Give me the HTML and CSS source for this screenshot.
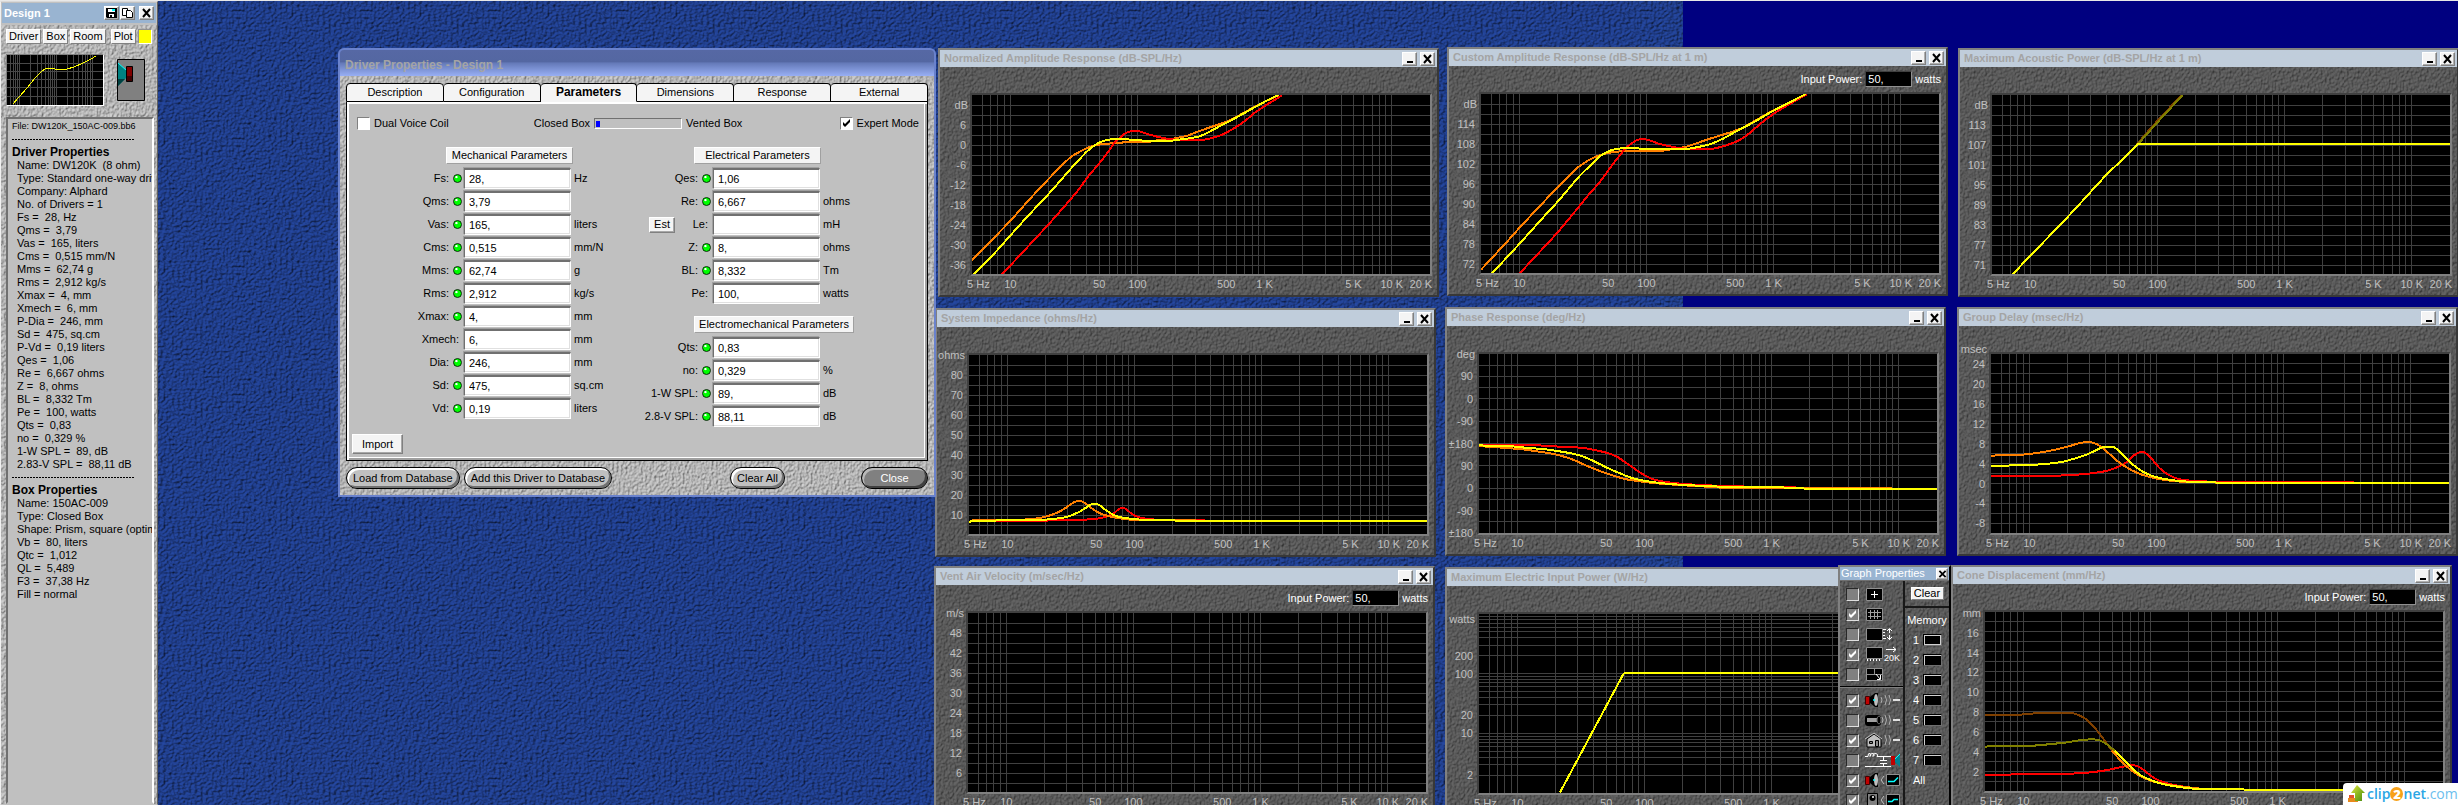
FILE: index.html
```html
<!DOCTYPE html>
<html lang="en">
<head>
<meta charset="utf-8">
<title>Driver Properties - Design 1</title>
<link rel="stylesheet" href="styles.css">
</head>
<body>
<main class="desktop">

<aside class="sidebar">
  <header class="side-title">
    <h1>Design 1</h1>
    <button class="tbtn" aria-label="Save"><svg viewBox="0 0 11 10"><path d="M0 0h11v10H1L0 9z" fill="#000"/><path d="M2 1h7v3H2z" fill="#fff"/><path d="M6 1h3v2H6z" fill="#0ff"/><path d="M3 6h5v3H3z" fill="#fff"/><path d="M4 7h2v2H4z" fill="#000"/></svg></button>
    <button class="tbtn" aria-label="Copy"><svg viewBox="0 0 11 10"><path d="M.5.5h5v7h-5z" fill="#fff" stroke="#000"/><path d="M4.500 2.500h4l2 2v5h-6z" fill="#fff" stroke="#000"/></svg></button>
    <button class="tbtn tbtn-close" aria-label="Close design"><svg viewBox="0 0 11 10"><path d="M2 1l7 8M9 1l-7 8" stroke="#000" stroke-width="2"/></svg></button>
  </header>
  <div class="side-body">
    <nav class="side-tools">
      <button class="tool">Driver</button><button class="tool">Box</button><button class="tool">Room</button>
      <button class="tool plot">Plot</button><button class="swatch" aria-label="Plot colour"></button>
    </nav>
    <div class="side-preview">
      <svg class="mini" viewBox="0 0 96 50" aria-label="Response preview">
        <path d="M0 8h96M0 16h96M0 24h96M0 32h96M0 41h96M3 0v50M6 0v50M8 0v50M10 0v50M12 0v50M23 0v50M30 0v50M34 0v50M38 0v50M41 0v50M43 0v50M45 0v50M47 0v50M49 0v50M60 0v50M66 0v50M71 0v50M75 0v50M78 0v50M80 0v50M83 0v50M85 0v50" stroke="#484848"/>
        <polyline points="6,49 12,42 20,33 28,23 34,17 38,14 43,13 48,14 60,14 67,12 76,8 84,4 89,1" fill="none" stroke="#ff0" stroke-width="1"/>
      </svg>
      <svg class="cab" viewBox="0 0 28 42" aria-label="Closed box">
        <path d="M.5.5h27v41H.5z" fill="#808080" stroke="#000"/>
        <path d="M1 4l8 7v8l-8 8z" fill="#008080"/><path d="M1 4l8 7" stroke="#0ff"/><path d="M1 20h7l-7 7z" fill="#004040"/>
        <path d="M9.500 7.500h6v15h-6z" fill="#800000" stroke="#000"/><path d="M10 17h5v5h-5z" fill="#400000"/>
      </svg>
    </div>
    <section class="props">
      <p class="file">File: DW120K_150AC-009.bb6</p>
      <hr>
      <h2>Driver Properties</h2>
      <ul>
        <li>Name: DW120K&nbsp; (8 ohm)</li><li>Type: Standard one-way driver</li><li>Company: Alphard</li><li>No. of Drivers = 1</li>
        <li>Fs =&nbsp; 28, Hz</li><li>Qms =&nbsp; 3,79</li><li>Vas =&nbsp; 165, liters</li><li>Cms =&nbsp; 0,515 mm/N</li><li>Mms =&nbsp; 62,74 g</li>
        <li>Rms =&nbsp; 2,912 kg/s</li><li>Xmax =&nbsp; 4, mm</li><li>Xmech =&nbsp; 6, mm</li><li>P-Dia =&nbsp; 246, mm</li><li>Sd =&nbsp; 475, sq.cm</li>
        <li>P-Vd =&nbsp; 0,19 liters</li><li>Qes =&nbsp; 1,06</li><li>Re =&nbsp; 6,667 ohms</li><li>Z =&nbsp; 8, ohms</li><li>BL =&nbsp; 8,332 Tm</li>
        <li>Pe =&nbsp; 100, watts</li><li>Qts =&nbsp; 0,83</li><li>no =&nbsp; 0,329 %</li><li>1-W SPL =&nbsp; 89, dB</li><li>2.83-V SPL =&nbsp; 88,11 dB</li>
      </ul>
      <hr>
      <h2>Box Properties</h2>
      <ul>
        <li>Name: 150AC-009</li><li>Type: Closed Box</li><li>Shape: Prism, square (optimum)</li><li>Vb =&nbsp; 80, liters</li><li>Qtc =&nbsp; 1,012</li>
        <li>QL =&nbsp; 5,489</li><li>F3 =&nbsp; 37,38 Hz</li><li>Fill = normal</li>
      </ul>
    </section>
  </div>
</aside>

<section class="win w1" data-chart="normalized"><header><h2>Normalized Amplitude Response (dB-SPL/Hz)</h2></header></section>
<section class="win w2" data-chart="custom" data-power="50,"><header><h2>Custom Amplitude Response (dB-SPL/Hz at 1 m)</h2></header></section>
<section class="win w3" data-chart="acoustic"><header><h2>Maximum Acoustic Power (dB-SPL/Hz at 1 m)</h2></header></section>
<section class="win w4" data-chart="impedance"><header><h2>System Impedance (ohms/Hz)</h2></header></section>
<section class="win w5" data-chart="phase"><header><h2>Phase Response (deg/Hz)</h2></header></section>
<section class="win w6" data-chart="delay"><header><h2>Group Delay (msec/Hz)</h2></header></section>
<section class="win w7" data-chart="vent" data-power="50,"><header><h2>Vent Air Velocity (m/sec/Hz)</h2></header></section>
<section class="win w8" data-chart="electric"><header><h2>Maximum Electric Input Power (W/Hz)</h2></header></section>
<section class="win w9" data-chart="cone" data-power="50,"><header><h2>Cone Displacement (mm/Hz)</h2></header></section>

<section class="dialog">
  <header><h2>Driver Properties - Design 1</h2></header>
  <div class="dlg-body">
    <nav class="tabs">
      <button>Description</button><button>Configuration</button><button class="on">Parameters</button><button>Dimensions</button><button>Response</button><button>External</button>
    </nav>
    <form class="panel">
      <div class="options">
        <label><input type="checkbox" class="box"> Dual Voice Coil</label>
        <div class="kind">Closed Box <span class="meter"><i></i></span> Vented Box</div>
        <label><input type="checkbox" class="box" checked> Expert Mode</label>
      </div>
      <div class="groups">
        <div class="group mech">
          <h3 class="chip">Mechanical Parameters</h3>
          <div class="field"><label for="fs">Fs:<i class="led"></i></label><input id="fs" value="28,"><span>Hz</span></div>
          <div class="field"><label for="qms">Qms:<i class="led"></i></label><input id="qms" value="3,79"><span></span></div>
          <div class="field"><label for="vas">Vas:<i class="led"></i></label><input id="vas" value="165,"><span>liters</span></div>
          <div class="field"><label for="cms">Cms:<i class="led"></i></label><input id="cms" value="0,515"><span>mm/N</span></div>
          <div class="field"><label for="mms">Mms:<i class="led"></i></label><input id="mms" value="62,74"><span>g</span></div>
          <div class="field"><label for="rms">Rms:<i class="led"></i></label><input id="rms" value="2,912"><span>kg/s</span></div>
          <div class="field"><label for="xmax">Xmax:<i class="led"></i></label><input id="xmax" value="4,"><span>mm</span></div>
          <div class="field"><label for="xmech" class="noled">Xmech:</label><input id="xmech" value="6,"><span>mm</span></div>
          <div class="field"><label for="dia">Dia:<i class="led"></i></label><input id="dia" value="246,"><span>mm</span></div>
          <div class="field"><label for="sd">Sd:<i class="led"></i></label><input id="sd" value="475,"><span>sq.cm</span></div>
          <div class="field"><label for="vd">Vd:<i class="led"></i></label><input id="vd" value="0,19"><span>liters</span></div>
        </div>
        <div class="group elec">
          <h3 class="chip">Electrical Parameters</h3>
          <div class="field"><label for="qes">Qes:<i class="led"></i></label><input id="qes" value="1,06"><span></span></div>
          <div class="field"><label for="re">Re:<i class="led"></i></label><input id="re" value="6,667"><span>ohms</span></div>
          <div class="field"><div class="with-est"><button type="button" class="small">Est</button><label for="le" class="noled">Le:</label></div><input id="le" value=""><span>mH</span></div>
          <div class="field"><label for="z">Z:<i class="led"></i></label><input id="z" value="8,"><span>ohms</span></div>
          <div class="field"><label for="bl">BL:<i class="led"></i></label><input id="bl" value="8,332"><span>Tm</span></div>
          <div class="field"><label for="pe" class="noled">Pe:</label><input id="pe" value="100,"><span>watts</span></div>
          <h3 class="chip wide">Electromechanical Parameters</h3>
          <div class="field"><label for="qts">Qts:<i class="led"></i></label><input id="qts" value="0,83"><span></span></div>
          <div class="field"><label for="no">no:<i class="led"></i></label><input id="no" value="0,329"><span>%</span></div>
          <div class="field"><label for="spl1">1-W SPL:<i class="led"></i></label><input id="spl1" value="89,"><span>dB</span></div>
          <div class="field"><label for="spl2">2.8-V SPL:<i class="led"></i></label><input id="spl2" value="88,11"><span>dB</span></div>
        </div>
      </div>
      <button type="button" class="small import">Import</button>
    </form>
    <footer class="actions">
      <button>Load from Database</button><button>Add this Driver to Database</button><button class="clear-all">Clear All</button><button class="close">Close</button>
    </footer>
  </div>
</section>

<section class="palette">
  <header><h2>Graph Properties</h2><button class="tbtn" aria-label="Close graph properties"><svg viewBox="0 0 9 9"><path d="M1 1l7 7M8 1l-7 7" stroke="#000" stroke-width="2"/></svg></button></header>
  <div class="pal-body">
    <div class="pal-left">
      <label><input type="checkbox" class="dbox" aria-label="Cursor"><svg viewBox="0 0 36 16"><path d="M1.500 2.500h16v12h-16z" fill="#000" stroke="#909090"/><path d="M6 8.500h7M9.500 5v7" stroke="#fff"/></svg></label>
      <label><input type="checkbox" class="dbox" aria-label="Grid" checked><svg viewBox="0 0 36 16"><path d="M1.500 2.500h16v12h-16z" fill="#000" stroke="#909090"/><path d="M3 6.500h13M3 10.500h13M5.500 4v9M9.500 4v9M12.500 4v9" stroke="#a0a0a0"/></svg></label>
      <label><input type="checkbox" class="dbox" aria-label="Vertical scale"><svg viewBox="0 0 36 16"><path d="M1.500 2.500h16v12h-16z" fill="#000" stroke="#909090"/><path d="M18 3.500h3M18 6.500h2M18 9.500h2M18 12.500h3M24.500 3v4M24.500 9v5M22 5l2.500-2.500L27 5M22 11l2.500 2.500L27 11" stroke="#fff" fill="none"/></svg></label>
      <label><input type="checkbox" class="dbox" aria-label="Extend to 20K" checked><svg viewBox="0 0 36 16"><path d="M1.500 1.500h16v11h-16z" fill="#000" stroke="#909090"/><path d="M2.500 13v2M5.500 13v2M8.500 13v2M11.500 13v2M14.500 13v2M21 3.500h10M28 1l3 2.500L28 6" stroke="#fff" fill="none"/><text x="19" y="15" font-size="9" fill="#fff">20K</text></svg></label>
      <label><input type="checkbox" class="dbox" aria-label="Resize"><svg viewBox="0 0 36 16"><path d="M1.500 2.500h16v12h-16z" fill="#000" stroke="#909090"/><path d="M2 8.500h15M9.500 3v6" stroke="#909090"/><path d="M11 8l4 5M15.500 9v4.500H12" stroke="#fff" fill="none"/></svg></label>
      <hr>
      <label><input type="checkbox" class="dbox" aria-label="Driver response" checked><svg viewBox="0 0 36 16"><path d="M.5 4.500h4v8h-4z" fill="#c00000" stroke="#400"/><path d="M5 5l5-4h3v14h-3l-5-4z" fill="#000"/><ellipse cx="11" cy="8" rx="2" ry="6" fill="#c0c0c0"/><circle cx="9" cy="8" r="1" fill="#0ff"/><path d="M16 5q2 3 0 6M20 3q3 5 0 10M24 3q3 5 0 10" stroke="#b0b0b0" fill="none"/><path d="M28 8h7" stroke="#e0e0e0" stroke-width="2"/></svg></label>
      <label><input type="checkbox" class="dbox" aria-label="Vent response"><svg viewBox="0 0 36 16"><rect x="0" y="3" width="16" height="11" rx="3" fill="#000"/><path d="M2 6h11v4H2z" fill="#a0a0a0"/><ellipse cx="14" cy="8" rx="2" ry="4" fill="#000" stroke="#666"/><path d="M17 5q2 3 0 6M20 3q3 5 0 10M24 3q3 5 0 10" stroke="#b0b0b0" fill="none"/><path d="M28 8h7" stroke="#e0e0e0" stroke-width="2"/></svg></label>
      <label><input type="checkbox" class="dbox" aria-label="Room response" checked><svg viewBox="0 0 36 16"><path d="M2 7l7-5 7 5v8H2z" fill="#c0c0c0" stroke="#000"/><path d="M0 7l9-6 8 6" stroke="#c0c0c0" fill="none"/><path d="M4.500 9.500h3v2h-3zM10.500 8.500h3v6h-3z" fill="#888" stroke="#000"/><path d="M20 3q3 5 0 10M24 3q3 5 0 10" stroke="#b0b0b0" fill="none"/><path d="M28 8h7" stroke="#e0e0e0" stroke-width="2"/></svg></label>
      <label><input type="checkbox" class="dbox" aria-label="Network"><svg viewBox="0 0 36 16"><path d="M0 4.500h3q0-4 2-3t0 3q0-4 3-3t0 3q0-4 3-3t1 3h14M18.500 5v3M15 8.500h7M15 11.500h7M18.500 11v3M0 14.500h26" stroke="#fff" fill="none"/><path d="M26 4h4v9h-4z" fill="#c00000"/><path d="M30 7l5-5v13l-5-5z" fill="#008090"/><path d="M30 7l5-5" stroke="#0ff"/></svg></label>
      <label><input type="checkbox" class="dbox" aria-label="Driver equaliser" checked><svg viewBox="0 0 36 16"><path d="M.5 4.500h4v8h-4z" fill="#c00000" stroke="#400"/><path d="M5 5l5-4h3v14h-3l-5-4z" fill="#000"/><ellipse cx="11" cy="8" rx="2" ry="6" fill="#c0c0c0"/><circle cx="9" cy="8" r="1" fill="#0ff"/><path d="M19 4l-3 4 3 4" stroke="#c0c0c0" fill="none"/><path d="M21.500 2.500h13v11h-13z" fill="#000" stroke="#909090"/><path d="M23 9.500h6l4-4" stroke="#0ff" stroke-width="1.500" fill="none"/></svg></label>
      <label><input type="checkbox" class="dbox" aria-label="Box equaliser" checked><svg viewBox="0 0 36 16"><path d="M2.500 1.500h10v15h-10z" fill="#808080" stroke="#000"/><circle cx="7.500" cy="6" r="3" fill="#000"/><circle cx="8" cy="5" r="1" fill="#fff"/><path d="M19 4l-3 4 3 4" stroke="#c0c0c0" fill="none"/><path d="M21.500 2.500h13v11h-13z" fill="#000" stroke="#909090"/><path d="M23 9.500h4l2-2h4" stroke="#0ff" stroke-width="1.500" fill="none"/></svg></label>
    </div>
    <div class="pal-right">
      <div class="clear"><button>Clear</button></div>
      <p>Memory</p>
      <ol>
        <li>1<button class="on" aria-label="Memory 1"></button></li><li>2<button aria-label="Memory 2"></button></li><li>3<button aria-label="Memory 3"></button></li><li>4<button aria-label="Memory 4"></button></li><li>5<button aria-label="Memory 5"></button></li><li>6<button aria-label="Memory 6"></button></li><li>7<button aria-label="Memory 7"></button></li><li>All</li>
      </ol>
    </div>
  </div>
</section>

<div class="badge">
  <svg viewBox="0 0 17 18"><defs><linearGradient id="ga" x1="0" y1="0" x2="1" y2="1"><stop offset="0" stop-color="#e8e840"/><stop offset=".5" stop-color="#8cb820"/><stop offset="1" stop-color="#4a8a10"/></linearGradient></defs><path d="M1 10h5v4H1z" fill="#e0562c"/><path d="M0 13h10v4H0z" fill="#e88a1c"/><path d="M9 0l8 8h-3v8H7V8H3z" fill="url(#ga)"/></svg>
  <span>clip<b>2</b>net<em>.com</em></span>
</div>
</main>
<script src="charts.js"></script>
</body>
</html>
```
FILE: styles.css
```css
:root {
  --sans: "Liberation Sans", Arial, sans-serif;
  --stone: url("data:image/svg+xml,%3Csvg xmlns='http://www.w3.org/2000/svg' width='128' height='128'%3E%3Cfilter id='f' x='0' y='0' width='100%25' height='100%25' color-interpolation-filters='sRGB'%3E%3CfeTurbulence type='fractalNoise' baseFrequency='.45 .35' numOctaves='2' seed='4' stitchTiles='stitch'/%3E%3CfeDiffuseLighting lighting-color='%23d2d2d2' surfaceScale='1.300'%3E%3CfeDistantLight azimuth='225' elevation='60'/%3E%3C/feDiffuseLighting%3E%3C/filter%3E%3Crect width='128' height='128' filter='url(%23f)'/%3E%3C/svg%3E");
  --dark: url("data:image/svg+xml,%3Csvg xmlns='http://www.w3.org/2000/svg' width='128' height='128'%3E%3Cfilter id='f' x='0' y='0' width='100%25' height='100%25' color-interpolation-filters='sRGB'%3E%3CfeTurbulence type='fractalNoise' baseFrequency='.45 .35' numOctaves='2' seed='7' stitchTiles='stitch'/%3E%3CfeDiffuseLighting lighting-color='%23686868' surfaceScale='1.300'%3E%3CfeDistantLight azimuth='225' elevation='60'/%3E%3C/feDiffuseLighting%3E%3C/filter%3E%3Crect width='128' height='128' filter='url(%23f)'/%3E%3C/svg%3E");
  --denim: url("data:image/svg+xml,%3Csvg xmlns='http://www.w3.org/2000/svg' width='128' height='128'%3E%3Cfilter id='f' x='0' y='0' width='100%25' height='100%25' color-interpolation-filters='sRGB'%3E%3CfeTurbulence type='fractalNoise' baseFrequency='.35 .4' numOctaves='2' seed='2' stitchTiles='stitch'/%3E%3CfeDiffuseLighting lighting-color='%232548a2' surfaceScale='1.800'%3E%3CfeDistantLight azimuth='225' elevation='60'/%3E%3C/feDiffuseLighting%3E%3C/filter%3E%3Crect width='128' height='128' filter='url(%23f)'/%3E%3C/svg%3E");
  --tick: url("data:image/svg+xml,%3Csvg xmlns='http://www.w3.org/2000/svg' viewBox='0 0 9 9'%3E%3Cpath d='M1 3v3l2 2 5-5V0L3 5z'/%3E%3C/svg%3E");
  --tick-light: url("data:image/svg+xml,%3Csvg xmlns='http://www.w3.org/2000/svg' viewBox='0 0 9 9'%3E%3Cpath fill='white' d='M1 3v3l2 2 5-5V0L3 5z'/%3E%3C/svg%3E");
}
* { box-sizing: border-box; margin: 0; padding: 0; }
body { font: 11px/13px var(--sans); color: #000; overflow: hidden; }
button, input { font: inherit; color: inherit; border: 0; border-radius: 0; }
ul, ol { list-style: none; }
i { font-style: normal; }
h1, h2, h3 { font-size: 11px; }

.desktop { position: relative; height: 100vh; overflow: hidden; border-top: 1px solid #e8e8e8;
  background: linear-gradient(#000080, #000080) 1683px 0 no-repeat, var(--denim); }

/* shared small buttons */
.tbtn { width: 15px; height: 14px; flex: none; display: grid; place-items: center; background: #f4f4f4;
  border: 1px solid; border-color: #fff #808080 #808080 #fff; box-shadow: inset -1px -1px #b0b0b0; }
.tbtn svg { width: 11px; height: 10px; display: block; }

/* sidebar */
.sidebar { position: absolute; left: 0; top: 0; bottom: 0; width: 158px; display: flex; flex-direction: column;
  border: 1px solid; border-color: #d8d8d8 #606060 #c0c0c0 #f0f0f0; background: #c0c0c0; }
.side-title { height: 20px; display: flex; align-items: center; gap: 1px; margin: 1px 1px 2px; padding: 0 2px; background: #99b4d1; color: #fff; }
.side-title h1 { flex: 1; }
.side-title .tbtn-close { margin-left: 3px; }
.side-body { flex: 1; min-height: 0; display: flex; flex-direction: column; padding: 4px 3px 0 5px; background: var(--stone); }
.side-tools { display: flex; gap: 2px; height: 15px; }
.tool { flex: none; padding: 0 2px; background: #f4f4f4; border: 1px solid; border-color: #fff #808080 #808080 #fff; }
.tool.plot { margin-left: 3px; }
.swatch { flex: none; width: 14px; background: #ff0; border: 1px solid; border-color: #909090 #fff #fff #909090; }
.side-preview { display: flex; justify-content: space-between; align-items: center; margin-top: 10px; padding-right: 9px; }
.mini { width: 98px; height: 52px; background: #000; border: 1px solid; border-color: #808080 #fff #fff #808080; shape-rendering: crispEdges; }
.cab { width: 28px; height: 42px; }
.props { flex: 1; margin-top: 11px; overflow: hidden; white-space: nowrap; padding: 1px 0 0 4px; background: #c0c0c0;
  border: 2px solid; border-color: #707070 #fff #c0c0c0 #707070; }
.props .file { font-size: 9px; }
.props hr { width: 122px; height: 1px; margin: 6px 0; border: 0; background: repeating-linear-gradient(90deg, #000 0 2px, transparent 2px 3px); }
.props h2 { font-size: 12px; }
.props li { padding-left: 5px; }

/* chart windows */
.win { position: absolute; width: 501px; height: 249px; display: flex; flex-direction: column; color: #c0c0c0;
  border: 2px solid; border-color: #808080 #383838 #383838 #808080; background: var(--dark); }
.win > header { height: 17px; display: flex; align-items: center; gap: 3px; padding: 0 2px 0 4px; background: #c0cddb; color: #a4a4a4; }
.win h2 { flex: 1; }
.win .strip { height: 26px; display: flex; justify-content: flex-end; align-items: center; gap: 3px; padding-right: 5px; color: #fff; }
.win .strip input { width: 47px; height: 16px; padding-left: 2px; background: #000; border: 1px solid; border-color: #404040 #909090 #909090 #404040; }
.win .plot { position: relative; height: 183px; margin: 0 5px 0 30px; border: 2px solid; border-color: #404040 #808080 #808080 #404040; background: #000; }
.plot svg { display: block; width: 100%; height: 100%; }
.plot .grid { stroke: #404040; stroke-width: 1; }
.plot path { fill: none; stroke-width: 2; vector-effect: non-scaling-stroke; shape-rendering: crispEdges; }
.plot .ylab, .plot .xlab { position: absolute; white-space: nowrap; }
.plot .ylab { right: 100%; margin-right: 6px; transform: translateY(-50%); }
.plot .ylab.unit { margin-right: 4px; }
.plot .xlab { top: 100%; margin-top: 4px; transform: translateX(-50%); }
.w1 { left: 938px; top: 47px; }
.w2 { left: 1447px; top: 46px; }
.w3 { left: 1958px; top: 47px; }
.w4 { left: 935px; top: 307px; }
.w5 { left: 1445px; top: 306px; }
.w6 { left: 1957px; top: 306px; }
.w7 { left: 934px; top: 565px; }
.w8 { left: 1445px; top: 566px; }
.w9 { left: 1951px; top: 564px; }

/* driver dialog */
.dialog { position: absolute; left: 338px; top: 47px; width: 598px; border: 2px solid #6a82cc; border-radius: 6px 6px 0 0; background: #6a82cc; }
.dialog > header { height: 26px; display: flex; align-items: center; padding: 4px 0 0 5px; border-radius: 4px 4px 0 0;
  background: linear-gradient(#5668a4, #5467a2 45%, #6479b8 50%, #98aff4); color: #a4a4a4; }
.dialog > header h2 { font-size: 12px; }
.dlg-body { padding: 7px 6px 6px; background: var(--stone); }
.tabs { display: flex; height: 19px; }
.tabs button { flex: 1; background: #f4f4f4; border: 1px solid #000; border-width: 1px 1px 1px 0; border-radius: 4px 4px 0 0; padding-bottom: 1px; }
.tabs button:first-child { border-left-width: 1px; }
.tabs .on { border-bottom-color: #f4f4f4; font-weight: bold; font-size: 12px; padding: 0; }
.panel { display: flex; flex-direction: column; padding: 14px 7px 6px 0; background: #c0c0c0; border: 1px solid #000; border-top: 0;
  box-shadow: inset 2px 2px #fff, inset -2px -2px #a0a0a0, inset -3px -3px #fff; }
.options { display: flex; justify-content: space-between; align-items: center; height: 15px; padding: 0 1px 0 10px; }
.options label, .kind { display: flex; align-items: center; gap: 4px; }
.kind { margin-right: 12px; }
.box { appearance: none; width: 13px; height: 13px; background: #fff; border: 1px solid; border-color: #808080 #fff #fff #808080; }
.box:checked { background: #fff var(--tick) center / 9px no-repeat; }
.meter { width: 88px; height: 11px; padding: 2px 1px; border: 1px solid; border-color: #707070 #fff #fff #707070; }
.meter i { display: block; width: 4px; height: 6px; background: #00f; }
.groups { display: flex; padding: 16px 0 0 65px; }
.mech { width: 234px; }
.chip { width: 127px; height: 17px; margin: 0 0 3px 34px; text-align: center; font: 11px/14px var(--sans); background: #f4f4f4;
  border: 1px solid; border-color: #fff #a0a0a0 #a0a0a0 #fff; white-space: nowrap; }
.elec .chip { margin-left: 48px; }
.elec .chip.wide { width: 160px; margin-top: 11px; }
.field { display: flex; align-items: center; height: 23px; }
.field label { width: 52px; display: flex; justify-content: flex-end; align-items: center; gap: 4px; padding-right: 2px; white-space: nowrap; }
.elec .field label { width: 67px; }
.field label.noled { padding-right: 5px; }
.field .with-est { width: 67px; display: flex; align-items: center; justify-content: space-between; padding-left: 3px; }
.elec .with-est label { width: auto; }
.with-est .small { width: 26px; }
.led { flex: none; width: 9px; height: 9px; border: 1px solid #003000; border-radius: 50%; background: radial-gradient(circle at 35% 30%, #fff 0 12%, #0f0 22%); }
.field input { width: 107px; height: 21px; padding-left: 4px; background: #fff; border: 1px solid #fff; border-top: 2px solid #707070; border-left: 1px solid #707070; box-shadow: -1px -1px #a0a0a0, inset -1px -1px #e0e0e0; }
.field span { padding-left: 3px; }
.small { background: #f4f4f4; border: 1px solid; border-color: #fff #808080 #808080 #fff; box-shadow: inset -1px -1px #a8a8a8; height: 16px; }
.import { width: 51px; height: 20px; margin: 6px 0 0 5px; }
.actions { display: flex; gap: 4px; padding-top: 6px; }
.actions button { height: 22px; padding: 0 6px; border: 1px solid #000; border-radius: 11px; background: #c0c0c0; box-shadow: inset 2px 2px #fff, inset -2px -2px #707070; }
.actions .clear-all { margin-left: auto; margin-right: 72px; }
.actions .close { width: 67px; background: #808080; color: #fff; box-shadow: inset 2px 2px #b8b8b8, inset -2px -2px #404040; }

/* graph palette */
.palette { position: absolute; left: 1838px; top: 564px; width: 113px; color: #fff;
  border: 2px solid; border-color: #808080 #000 #000 #808080; background: var(--dark); }
.palette > header { height: 13px; display: flex; align-items: center; padding: 0 1px; background: #99b4d1; }
.palette h2 { flex: 1; font: 11px/13px var(--sans); }
.palette .tbtn { width: 12px; height: 12px; }
.palette .tbtn svg { width: 9px; height: 8px; }
.pal-body { display: flex; border-top: 1px solid #707070; }
.pal-left { flex: 1; padding-top: 3px; border-right: 2px solid #181818; }
.pal-left label { height: 20px; display: flex; align-items: center; gap: 6px; padding-left: 6px; }
.pal-left svg { flex: none; width: 36px; height: 16px; overflow: visible; font-family: var(--sans); }
.pal-left hr { margin: 2px 0; border: 0; border-top: 1px solid #000; border-bottom: 1px solid #808080; }
.dbox { appearance: none; flex: none; width: 13px; height: 13px; background: #808080; border: 1px solid; border-color: #282828 #e0e0e0 #e0e0e0 #282828; }
.dbox:checked { background: #808080 var(--tick-light) center / 9px no-repeat; }
.pal-right { width: 44px; }
.clear { height: 27px; display: grid; place-items: center; border-bottom: 2px solid #181818; }
.clear button { width: 33px; height: 13px; line-height: 11px; background: #f4f4f4; color: #000; border: 1px solid; border-color: #fff #808080 #808080 #fff; }
.pal-right p { height: 22px; line-height: 24px; text-align: center; }
.pal-right li { height: 20px; display: flex; align-items: center; gap: 4px; padding-left: 8px; }
.pal-right li button { width: 19px; height: 12px; background: #000; border: 1px solid; border-color: #000 #707070 #707070 #000; box-shadow: inset 1px 1px #d0d0d0; }
.pal-right li .on { box-shadow: inset 1px 1px #d0d0d0, inset -1px -1px #d0d0d0; }

.badge { position: absolute; right: 0; bottom: 0; width: 115px; height: 22px; display: flex; align-items: center; gap: 2px; padding-left: 5px; background: #fff; border-top-left-radius: 4px; }
.badge svg { flex: none; width: 17px; height: 18px; }
.badge span { font: 600 14px/20px "Open Sans", sans-serif; color: #2ba6e4; display: flex; align-items: center; }
.badge b { display: grid; place-items: center; width: 13px; height: 14px; border-radius: 50%; background: #f7a11a; color: #fff; font-size: 13px; line-height: 14px; }
.badge em { font-style: normal; font-weight: 400; color: #6cc0ee; }
```
FILE: charts.js
```js
const ORANGE = '#ff8000', YELLOW = '#ffff00', RED = '#ff0000', BROWN = '#804000', OLIVE = '#808000';

// Evenly spaced labels: first tick position, step, texts.
const ticks = (start, step, texts) => texts.map((t, i) => [t, start + step * i]);
const evenLines = (start, step, end) => {
  const out = [];
  for (let y = start; y < end; y += step) out.push(y);
  return out;
};
const logLines = () => {
  const out = [];
  for (let d = 1; d <= 100; d *= 10)
    for (let m = 1; m < 10; m++) out.push(537 - Math.log10(d * m) * 179);
  return out.concat(0).filter(y => y > 2 && y < 535);
};

// view: [x, y, width, height] of the plot's own drawing units.
const charts = {
  normalized: { view: [123, 164, 1359, 537], labels: ticks(30, 60, ['dB', '6', '0', '-6', '-12', '-18', '-24', '-30', '-36']), lines: evenLines(30, 30, 530), curves: [
    [ORANGE, '123,660 155,627 203,577 238,540 300,470 353,413 395,370 419,348 445,333 470,321 500,313 540,309 580,306 635,306 680,299 725,294 765,285 795,273 850,254 890,239 935,214 990,185 1030,166'],
    [RED, '212,702 238,674 300,607 353,549 400,495 440,447 467,409 500,370 530,330 545,308 560,294 575,281 590,274 602,271 620,273 650,283 690,293 730,298 795,300 835,293 870,281 905,261 935,240 965,215 990,198 1043,165'],
    [YELLOW, '128,702 165,665 203,624 238,584 300,515 353,458 419,382 450,348 470,328 498,308 520,300 550,296 580,297 620,300 660,302 705,302 745,297 795,289 820,278 850,262 890,241 935,216 992,184 1032,164']] },
  custom: { view: [123, 161, 1376, 537], labels: ticks(30, 60, ['dB', '114', '108', '102', '96', '90', '84', '78', '72']), lines: evenLines(30, 30, 530), curves: [
    [ORANGE, '123,688 155,654 203,602 238,563 300,497 355,439 405,389 430,370 455,355 480,345 510,337 545,333 610,333 670,331 705,325 736,320 770,309 805,297 850,283 905,264 945,242 1000,211 1095,163'],
    [RED, '240,698 300,634 355,574 410,508 450,459 480,425 510,384 540,345 560,322 580,306 595,298 608,296 630,300 660,311 700,320 736,325 790,327 820,325 860,315 900,299 930,278 965,248 1000,222 1030,203 1103,161'],
    [YELLOW, '155,699 185,668 203,649 238,611 300,542 355,482 420,406 450,377 480,348 500,336 520,328 545,324 590,324 620,326 740,326 775,320 810,312 850,295 890,273 945,244 1000,212 1100,161']] },
  acoustic: { view: [155, 164, 1376, 537], labels: ticks(30, 60, ['dB', '113', '107', '101', '95', '89', '83', '77', '71']), lines: evenLines(30, 30, 530), curves: [
    [BROWN, '590,312 648,246 725,164'], [OLIVE, '593,312 652,246 728,164'],
    [YELLOW, '218,702 250,667 388,524 500,402 538,366 592,312'], [YELLOW, '592,312 1531,312']] },
  impedance: { view: [114, 164, 1359, 537], labels: ticks(0, 60, ['ohms', '80', '70', '60', '50', '40', '30', '20', '10']), lines: evenLines(30, 30, 530), curves: [
    [RED, '114,665 125,662 430,660 470,657 500,654 525,648 545,638 560,625 570,623 580,626 595,639 615,650 640,655 700,660 1470,663'],
    [ORANGE, '114,665 125,660 270,658 310,655 345,648 380,635 405,620 425,606 440,602 455,606 480,625 505,640 540,650 570,655 620,660 1470,662'],
    [YELLOW, '114,665 125,662 340,658 380,654 410,648 440,635 460,623 475,613 487,610 500,614 520,629 545,645 570,652 625,658 770,661 1473,663']] },
  phase: { view: [117, 161, 1376, 540], labels: ticks(0, 67.5, ['deg', '90', '0', '-90', '±180', '90', '0', '-90', '±180']), lines: evenLines(33.75, 33.75, 530), curves: [
    [RED, '117,435 260,435 350,440 400,442 440,446 475,453 500,459 530,470 555,487 580,504 605,521 635,537 665,545 730,553 880,560 1060,563 1100,567 1492,567'],
    [ORANGE, '117,439 180,443 250,449 320,459 360,467 400,480 440,498 480,514 520,528 560,539 600,545 660,552 780,560 870,565 1492,567'],
    [YELLOW, '117,437 195,438 260,444 320,449 385,459 420,467 450,479 480,493 510,508 550,525 580,536 630,546 690,553 770,558 870,562 1045,564 1100,567 1493,567']] },
  delay: { view: [153, 161, 1376, 539], labels: [['msec', -16]].concat(ticks(30, 60, ['24', '20', '16', '12', '8', '4', '0', '-4', '-8'])), lines: evenLines(30, 30, 530), curves: [
    [RED, '153,530 160,528 360,527 430,523 470,518 500,513 535,501 560,487 580,468 595,459 606,456 617,459 635,476 660,505 685,524 715,537 750,542 840,546 1528,549'],
    [ORANGE, '153,470 160,467 200,466 260,463 310,456 350,448 390,438 420,429 445,426 465,430 485,441 510,463 535,485 560,502 590,518 625,530 660,538 720,545 830,548 1528,549'],
    [YELLOW, '153,500 160,498 240,496 320,492 370,485 410,474 440,464 470,450 490,441 510,440 525,443 545,460 570,486 595,506 620,521 650,532 690,540 740,545 830,548 1529,549']] },
  vent: { view: [0, 0, 1359, 537], labels: ticks(0, 60, ['m/s', '48', '42', '36', '30', '24', '18', '12', '6']), lines: evenLines(30, 30, 530), curves: [] },
  electric: { view: [117, 176, 1376, 537], labels: [['watts', 15], ['200', 125], ['100', 179], ['20', 304], ['10', 358], ['2', 483]], lines: logLines(), curves: [
    [YELLOW, '360,712 552,354'], [YELLOW, '552,354 1493,354']] },
  cone: { view: [135, 170, 1376, 539], labels: ticks(2, 60, ['mm', '16', '14', '12', '10', '8', '6', '4', '2']), lines: evenLines(30, 30, 530), curves: [
    [BROWN, '135,480 225,480 290,475 350,473 395,474 420,482 445,498 470,525 495,558 517,588'],
    [OLIVE, '135,577 150,573 270,573 330,568 385,562 430,555 475,555 500,568 525,588'],
    [RED, '135,660 340,658 430,655 490,648 540,638 565,633 585,632 605,641 640,668 670,682 720,694 790,703'],
    [ORANGE, '517,588 545,620 575,647 605,666 640,680 690,691 790,703'],
    [YELLOW, '525,588 550,614 575,638 600,660 630,675 665,687 720,697 790,704 1511,705']] }
};

const freqShare = f => Math.log10(f / 5) / Math.log10(4000);
const xLabels = [['5 Hz', 0.014], ['10', freqShare(10)], ['50', freqShare(50)], ['100', freqShare(100)], ['500', freqShare(500)],
  ['1 K', freqShare(1000)], ['5 K', freqShare(5000)], ['10 K', freqShare(10000)], ['20 K', 0.98]];

// Smooth path through the points (Catmull-Rom as cubic segments).
function smooth(text) {
  const p = text.split(' ').map(s => s.split(',').map(Number));
  let d = `M${p[0]}`;
  for (let i = 0; i < p.length - 1; i++) {
    const a = p[i - 1] || p[i], b = p[i], c = p[i + 1], e = p[i + 2] || c;
    const span = c[0] - b[0], third = span / 3;
    const s1 = (c[1] - a[1]) / (c[0] - a[0]), s2 = (e[1] - b[1]) / (e[0] - b[0]);
    d += `C${b[0] + third},${b[1] + s1 * third} ${c[0] - third},${c[1] - s2 * third} ${c[0]},${c[1]}`;
  }
  return d;
}

document.querySelectorAll('.win').forEach((win, n) => {
  const { view, labels, lines, curves } = charts[win.dataset.chart];
  const [x0, y0, w, h] = view;
  let grid = '';
  for (let d = 1; d <= 10000; d *= 10)
    for (let m = 1; m < 10; m++) {
      const f = d * m;
      if (f > 5 && f < 20000) grid += `M${x0 + freqShare(f) * w} ${y0}v${h}`;
    }
  lines.forEach(y => { grid += `M${x0} ${y0 + y}h${w}`; });

  win.querySelector('header').insertAdjacentHTML('beforeend',
    `<button class="tbtn" aria-label="Minimize"><svg viewBox="0 0 11 10"><path d="M3 8h6" stroke="#000" stroke-width="2"/></svg></button>
     <button class="tbtn" aria-label="Close"><svg viewBox="0 0 11 10"><path d="M2 1l7 8M9 1l-7 8" stroke="#000" stroke-width="2"/></svg></button>`);
  const power = win.dataset.power
    ? `<label for="power${n}">Input Power:</label><input id="power${n}" value="${win.dataset.power}"><span>watts</span>` : '';
  win.insertAdjacentHTML('beforeend', `<div class="strip">${power}</div>
    <div class="plot">
      <svg viewBox="${view.join(' ')}" preserveAspectRatio="none"><path class="grid" d="${grid}"/>
      ${curves.map(([c, pts]) => `<path stroke="${c}" d="${smooth(pts)}"/>`).join('')}</svg>
      ${labels.map(([t, y], i) => `<span class="ylab${i ? '' : ' unit'}" style="top:${y / h * 100}%">${t}</span>`).join('')}
      ${xLabels.map(([t, x]) => `<span class="xlab" style="left:${x * 100}%">${t}</span>`).join('')}
    </div>`);
});
```
